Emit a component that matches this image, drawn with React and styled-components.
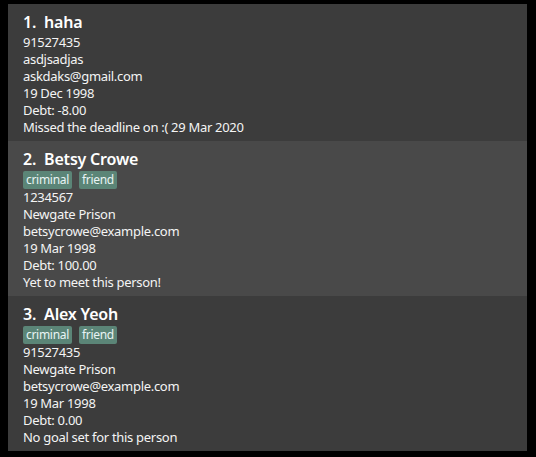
import styled, { createGlobalStyle } from "styled-components";

const GlobalStyle = createGlobalStyle`
  html, body {
    margin: 0;
    padding: 0;
    background: #000;
  }
`;

const Frame = styled.div`
  width: 536px;
  height: 457px;
  box-sizing: border-box;
  padding: 4px 9px 6px 8px;
  background: #000;
  font-family: "Noto Sans", "Open Sans", sans-serif;
`;

const List = styled.div`
  display: flex;
  flex-direction: column;
`;

const Card = styled.div`
  background: ${(props) => (props.$odd ? "#494949" : "#3c3c3c")};
  padding: 7px 15px 5px 15px;
  display: flex;
  flex-direction: column;
`;

const Title = styled.div`
  color: #ffffff;
  font-size: 16px;
  font-weight: 600;
  letter-spacing: -0.2px;
  line-height: 23px;
  white-space: pre;
`;

const Tags = styled.div`
  display: flex;
  gap: 7px;
  height: 18px;
`;

const Tag = styled.span`
  background: #5b8577;
  color: #e8f4f4;
  font-size: 12px;
  letter-spacing: -0.3px;
  line-height: 18px;
  padding: 0 3px;
  border-radius: 2px;
`;

const Line = styled.div`
  color: #f4f4f4;
  font-size: 13px;
  letter-spacing: -0.3px;
  line-height: 17px;
`;

const people = [
  {
    name: "haha",
    tags: [],
    phone: "91527435",
    address: "asdjsadjas",
    email: "askdaks@gmail.com",
    birthday: "19 Dec 1998",
    debt: "-8.00",
    goal: "Missed the deadline on :( 29 Mar 2020",
  },
  {
    name: "Betsy Crowe",
    tags: ["criminal", "friend"],
    phone: "1234567",
    address: "Newgate Prison",
    email: "betsycrowe@example.com",
    birthday: "19 Mar 1998",
    debt: "100.00",
    goal: "Yet to meet this person!",
  },
  {
    name: "Alex Yeoh",
    tags: ["criminal", "friend"],
    phone: "91527435",
    address: "Newgate Prison",
    email: "betsycrowe@example.com",
    birthday: "19 Mar 1998",
    debt: "0.00",
    goal: "No goal set for this person",
  },
];

const App = () => {
  return (
    <>
      <GlobalStyle />
      <Frame>
        <List>
          {people.map((p, index) => (
            <Card key={index} $odd={index % 2 === 1}>
              <Title>{`${index + 1}.  ${p.name}`}</Title>
              {p.tags.length > 0 && (
                <Tags>
                  {p.tags.map((t) => (
                    <Tag key={t}>{t}</Tag>
                  ))}
                </Tags>
              )}
              <Line>{p.phone}</Line>
              <Line>{p.address}</Line>
              <Line>{p.email}</Line>
              <Line>{p.birthday}</Line>
              <Line>Debt: {p.debt}</Line>
              <Line>{p.goal}</Line>
            </Card>
          ))}
        </List>
      </Frame>
    </>
  );
};

export default App;
